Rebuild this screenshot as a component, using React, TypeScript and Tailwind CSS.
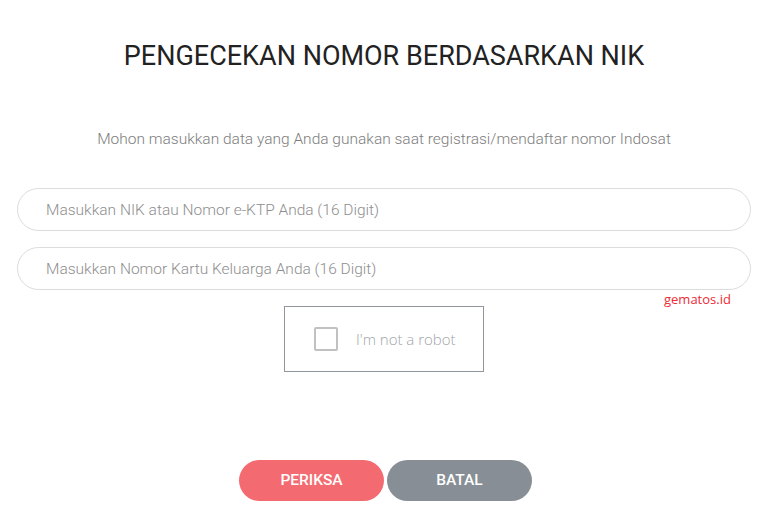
export default function App() {
  return (
    <div className="relative min-h-[528px] w-full bg-white font-[Roboto,sans-serif]">
      <div className="flex flex-col items-center px-[17px]">
        <h1 className="mt-[38px] text-[27px] font-normal leading-[36px] text-[#222]">
          PENGECEKAN NOMOR BERDASARKAN NIK
        </h1>

        <p className="mt-[55px] text-[15.5px] font-light leading-5 text-[#7d7d7d]">
          Mohon masukkan data yang Anda gunakan saat registrasi/mendaftar nomor Indosat
        </p>

        <div className="mt-[39px] flex w-full flex-col gap-[16px]">
          <input
            className="h-[43px] w-full rounded-full border border-[#dcdcdc] px-[28px] text-[15.5px] font-light text-[#555] outline-none placeholder:text-[#8e8e8e]"
            placeholder="Masukkan NIK atau Nomor e-KTP Anda (16 Digit)"
          />
          <input
            className="h-[43px] w-full rounded-full border border-[#dcdcdc] px-[28px] text-[15.5px] font-light text-[#555] outline-none placeholder:text-[#8e8e8e]"
            placeholder="Masukkan Nomor Kartu Keluarga Anda (16 Digit)"
          />
        </div>

        <div className="mt-[16px] flex h-[66px] w-[200px] items-center border border-[#8f959b] bg-white pl-[29px]">
          <div className="h-[24px] w-[24px] rounded-[2px] border-2 border-[#c1c1c1]" />
          <span className="ml-[18px] font-['Open_Sans',sans-serif] text-[15px] font-light text-[#a0a4a8]">
            I'm not a robot
          </span>
        </div>

        <div className="ml-[3px] mt-[88px] flex gap-[3px]">
          <button className="h-[41px] w-[145px] rounded-full bg-[#f46a71] text-[15.5px] font-medium text-white">
            PERIKSA
          </button>
          <button className="h-[41px] w-[145px] rounded-full bg-[#878e95] text-[15.5px] font-medium text-white">
            BATAL
          </button>
        </div>
      </div>

      <span className="absolute left-[664px] top-[291px] font-['Open_Sans',sans-serif] text-[13px] leading-4 text-[#ee2a36]">
        gematos.id
      </span>
    </div>
  );
}
